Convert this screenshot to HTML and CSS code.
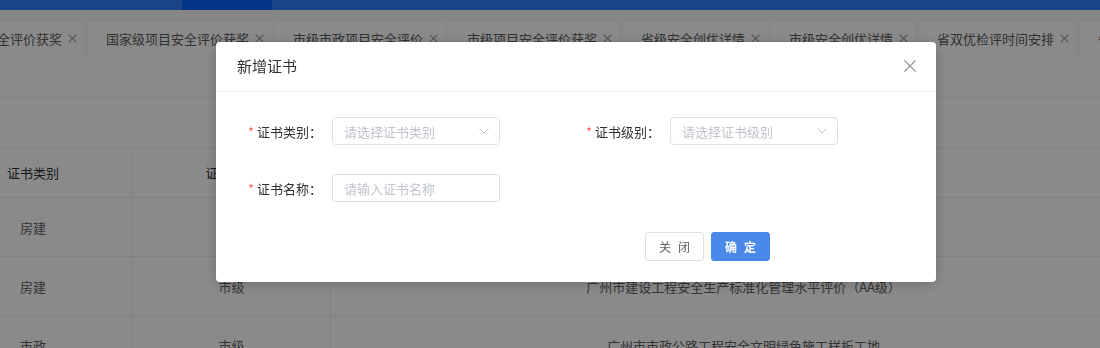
FILE: index.html
```html
<!DOCTYPE html>
<html lang="zh-CN">
<head>
  <meta charset="UTF-8">
  <meta name="viewport" content="width=device-width, initial-scale=1.0">
  <title>证书管理</title>
  <link rel="stylesheet" href="styles.css">
</head>
<body>

  <div class="topbar">
    <div class="topbar-active"></div>
  </div>

  <div class="tabbar">
    <div class="tabs">
      <div class="tab">省级项目安全评价获奖<span class="tab-x"></span></div>
      <div class="tab">国家级项目安全评价获奖<span class="tab-x"></span></div>
      <div class="tab">市级市政项目安全评价<span class="tab-x"></span></div>
      <div class="tab">市级项目安全评价获奖<span class="tab-x"></span></div>
      <div class="tab">省级安全创优详情<span class="tab-x"></span></div>
      <div class="tab">市级安全创优详情<span class="tab-x"></span></div>
      <div class="tab">省双优检评时间安排<span class="tab-x"></span></div>
      <div class="tab">省级证书管理<span class="tab-x"></span></div>
    </div>
  </div>

  <div class="toolbar"></div>
  <div class="searchbar"></div>

  <div class="table">
    <div class="tr th">
      <div class="td c1">证书类别</div>
      <div class="td c2">证书级别</div>
      <div class="td c3">证书名称</div>
    </div>
    <div class="tr">
      <div class="td c1">房建</div>
      <div class="td c2">市级</div>
      <div class="td c3">广州市建设工程安全生产标准化管理水平评价（AA级）</div>
    </div>
    <div class="tr">
      <div class="td c1">房建</div>
      <div class="td c2">市级</div>
      <div class="td c3">广州市建设工程安全生产标准化管理水平评价（AA级）</div>
    </div>
    <div class="tr">
      <div class="td c1">市政</div>
      <div class="td c2">市级</div>
      <div class="td c3">广州市市政公路工程安全文明绿色施工样板工地</div>
    </div>
  </div>

  <!-- dialog -->
  <div class="mask">
    <div class="dialog">
      <div class="dialog-header">
        <span class="dialog-title">新增证书</span>
        <svg class="dialog-close" width="12" height="12" viewBox="0 0 12 12">
          <path d="M0.5 0.5 L11.5 11.5 M11.5 0.5 L0.5 11.5" stroke="#909399" stroke-width="1.1" fill="none"/>
        </svg>
      </div>
      <div class="dialog-body">
        <div class="form-item">
          <label class="form-label"><i>*</i>证书类别：</label>
          <div class="input">
            <span class="placeholder">请选择证书类别</span>
            <svg class="arrow" width="10" height="6" viewBox="0 0 10 6">
              <polyline points="0.5,0.5 5,5 9.5,0.5" stroke="#c0c4cc" stroke-width="1" fill="none"/>
            </svg>
          </div>
        </div>
        <div class="form-item">
          <label class="form-label"><i>*</i>证书级别：</label>
          <div class="input">
            <span class="placeholder">请选择证书级别</span>
            <svg class="arrow" width="10" height="6" viewBox="0 0 10 6">
              <polyline points="0.5,0.5 5,5 9.5,0.5" stroke="#c0c4cc" stroke-width="1" fill="none"/>
            </svg>
          </div>
        </div>
        <div class="form-item">
          <label class="form-label"><i>*</i>证书名称：</label>
          <div class="input">
            <span class="placeholder">请输入证书名称</span>
          </div>
        </div>
      </div>
      <div class="dialog-footer">
        <button class="btn">关闭</button>
        <button class="btn btn-primary">确定</button>
      </div>
    </div>
  </div>

</body>
</html>
```

FILE: styles.css
```css
* {
  margin: 0;
  padding: 0;
  box-sizing: border-box;
}

body {
  font-family: "Noto Sans CJK SC", "Noto Sans", sans-serif;
  font-size: 13px;
  color: #606266;
  background-color: #fff;
  width: 1100px;
  height: 348px;
  overflow: hidden;
}

.topbar {
  height: 10px;
  background-color: #3280fe;
  padding-left: 182px;
}

.topbar-active {
  width: 90px;
  height: 10px;
  background-color: #0460fa;
}

.tabbar {
  height: 46px;
  background-color: #f7f7f7;
  padding-top: 10px;
  overflow: hidden;
}

.tabs {
  display: flex;
  gap: 4px;
  margin-left: -86px;
  white-space: nowrap;
}

.tab {
  flex: none;
  height: 35px;
  display: flex;
  align-items: center;
  padding: 0 7px 0 18px;
  background-color: #fff;
  border-top: 1px solid #f0f0f0;
  color: #5c5c5c;
}

.tab-x {
  position: relative;
  width: 9px;
  height: 9px;
  margin-left: 6px;
}

.tab-x::before,
.tab-x::after {
  content: "";
  position: absolute;
  left: 4px;
  top: -1px;
  width: 1px;
  height: 11px;
  background-color: #999;
  transform: rotate(45deg);
}

.tab-x::after {
  transform: rotate(-45deg);
}

.toolbar {
  height: 42px;
  border-bottom: 1px solid #ebeef5;
}

.searchbar {
  height: 50px;
  border-bottom: 1px solid #ebeef5;
}

.table {
  width: 1157px;
}

.tr {
  display: flex;
  height: 59px;
  border-bottom: 1px solid #ebeef5;
}

.tr.th {
  height: 50px;
  color: #303133;
}

.td {
  display: flex;
  align-items: center;
  justify-content: center;
  border-right: 1px solid #ebeef5;
}

.c1 {
  width: 133px;
  padding-right: 66px;
}

.c2 {
  width: 198px;
}

.c3 {
  flex: 1;
}

/* dialog */
.mask {
  position: fixed;
  top: 0;
  left: 0;
  right: 0;
  bottom: 0;
  background-color: rgba(0, 0, 0, 0.46);
  padding: 42px 0 0 216px;
}

.dialog {
  width: 720px;
  background: #fff;
  border-radius: 4px;
  box-shadow: 0 2px 12px rgba(0, 0, 0, 0.2);
}

.dialog-header {
  height: 50px;
  border-bottom: 1px solid #ebeef5;
  display: flex;
  align-items: center;
  justify-content: space-between;
  padding: 0 20px 2px 21px;
}

.dialog-title {
  font-size: 15px;
  color: #303133;
}

.dialog-close {
  display: block;
}

.dialog-body {
  display: grid;
  grid-template-columns: 338px 338px;
  row-gap: 29px;
  padding: 25px 20px 0;
}

.form-item {
  display: flex;
  align-items: center;
}

.form-label {
  width: 96px;
  padding-right: 10px;
  text-align: right;
  color: #303133;
  white-space: nowrap;
}

.form-label i {
  font-style: normal;
  color: #f56c6c;
  margin-right: 3px;
}

.input {
  width: 168px;
  height: 28px;
  border: 1px solid #dcdfe6;
  border-radius: 4px;
  display: flex;
  align-items: center;
  justify-content: space-between;
  padding: 0 10px 0 11px;
}

.placeholder {
  color: #c0c4cc;
}

.dialog-footer {
  display: flex;
  justify-content: flex-end;
  gap: 7px;
  padding: 30px 166px 21px 0;
}

.btn {
  width: 59px;
  height: 29px;
  font-family: inherit;
  font-size: 12px;
  letter-spacing: 7px;
  text-indent: 7px;
  border: 1px solid #dcdfe6;
  border-radius: 3px;
  background: #fff;
  color: #606266;
}

.btn-primary {
  background: #4a89ea;
  border-color: #4a89ea;
  color: #fff;
  font-weight: bold;
}
```
